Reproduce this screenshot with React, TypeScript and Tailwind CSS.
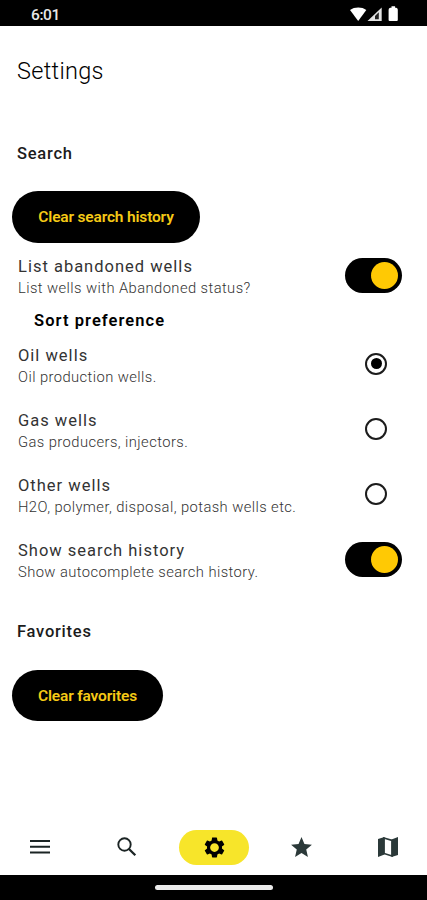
import { useState } from "react";
import type { ReactNode } from "react";
import { MdStar } from "react-icons/md";
import clsx from "clsx";

const wellTypes = [
  { id: "oil", title: "Oil wells", detail: "Oil production wells." },
  { id: "gas", title: "Gas wells", detail: "Gas producers, injectors." },
  { id: "other", title: "Other wells", detail: "H2O, polymer, disposal, potash wells etc." },
];

function StatusBar() {
  return (
    <header className="flex h-[26px] shrink-0 items-start justify-between bg-black pt-[6px] pr-[27px] pl-[31px] text-white">
      <span className="text-[15.5px] leading-[18px] font-medium tracking-[-0.4px] text-[#e8e8e8]">6:01</span>
      <svg width="50" height="16" viewBox="0 0 50 16" fill="#fff">
        <path d="M0 4C4.500 .7 12 .7 16.300 4L8.200 15Z" />
        <path d="M31.700 1.500V15H17.500Z" fill="#e4e4e4" />
        <path d="M28.800 6.300V13.300H25V10Z" fill="#222" />
        <path d="M41.500 .300h3.600v1.400h1.200q1.500 .6 1.500 2v10.300q0 1-1 1h-7.200q-1 0-1-1V3.700q0-1.400 1.500-2h1.400Z" />
      </svg>
    </header>
  );
}

function SettingRow({ title, detail, children }: { title: string; detail: string; children: ReactNode }) {
  return (
    <div className="flex h-[65px] items-center justify-between pr-[25px] pl-[18px]">
      <div className="pt-[3px]">
        <p className="text-[16.5px] leading-[22px] tracking-[1px] text-[#333]">{title}</p>
        <p className="text-[14.75px] leading-[21px] font-light tracking-[0.42px] text-[#333]">{detail}</p>
      </div>
      {children}
    </div>
  );
}

function Toggle({ on, onChange }: { on: boolean; onChange: () => void }) {
  return (
    <button role="switch" aria-checked={on} onClick={onChange} className={clsx("flex h-[35px] w-[57px] items-center rounded-full bg-black px-[4px]", on ? "justify-end" : "justify-start")}>
      <span className="size-[27px] rounded-full bg-[#ffc904]" />
    </button>
  );
}

function Radio({ checked, onChange }: { checked: boolean; onChange: () => void }) {
  return (
    <button role="radio" aria-checked={checked} onClick={onChange} className="mr-[15px] mb-[2px] flex size-[22px] items-center justify-center rounded-full border-2 border-[#1c1c1c]">
      {checked ? <span className="size-[11px] rounded-full bg-black" /> : null}
    </button>
  );
}

function PillButton({ className, children }: { className: string; children: ReactNode }) {
  return <button className={clsx("ml-[12px] block rounded-full bg-black pt-[2px] text-[15.5px] font-semibold tracking-[-0.17px] text-[#f6ca16]", className)}>{children}</button>;
}

function MenuIcon() {
  return (
    <svg width="20" height="14" viewBox="0 0 20 14" fill="#1b2424">
      <path d="M0 0h20v2H0zM0 5.700h20v2H0zM0 11.400h20v2H0z" />
    </svg>
  );
}

function SearchIcon() {
  return (
    <svg width="20" height="20" viewBox="0 0 20 20" fill="none" stroke="#1b2424">
      <circle cx="7.500" cy="7.500" r="6.200" strokeWidth="1.900" />
      <path d="M12 12L18.300 18.300" strokeWidth="2.300" />
    </svg>
  );
}

function GearIcon() {
  return (
    <svg width="25" height="25" viewBox="0 0 24 24" fill="currentColor">
      <path
        fillRule="evenodd"
        d="M19.140 12.940c.04-.3.06-.61.06-.94s-.02-.64-.07-.94l2.030-1.580a.49.49 0 0 0 .12-.61l-1.920-3.320a.488.488 0 0 0-.59-.22l-2.390.96c-.5-.38-1.030-.7-1.620-.94l-.36-2.540a.484.484 0 0 0-.48-.41h-3.840c-.24 0-.43.17-.47.41l-.36 2.540c-.59.24-1.130.57-1.620.94l-2.390-.96a.48.48 0 0 0-.59.22L2.740 8.870c-.12.21-.08.47.12.61l2.030 1.580c-.05.3-.09.63-.09.94s.02.64.07.94l-2.030 1.580a.49.49 0 0 0-.12.61l1.920 3.320c.12.22.37.29.59.22l2.390-.96c.5.38 1.030.7 1.620.94l.36 2.540c.05.24.24.41.48.41h3.840c.24 0 .44-.17.47-.41l.36-2.540c.59-.24 1.130-.56 1.620-.94l2.390.96c.22.08.47 0 .59-.22l1.920-3.320a.49.49 0 0 0-.12-.61zM12 16.200a4.200 4.200 0 1 1 0-8.400 4.200 4.200 0 0 1 0 8.400z"
      />
    </svg>
  );
}

function MapIcon() {
  return (
    <svg width="20" height="20" viewBox="0 0 20 20" fill="#2b3939">
      <path d="M0 2L6.500 0V17.500L0 20ZM13.500 2.500L20 0V18L13.500 20Z" />
      <path d="M6 .900L14 3.400V19L6 16.500Z" fill="none" stroke="#2b3939" strokeWidth="1.600" />
    </svg>
  );
}

const tabs = [
  { id: "menu", icon: <MenuIcon /> },
  { id: "search", icon: <SearchIcon /> },
  { id: "settings", icon: <GearIcon /> },
  { id: "favorites", icon: <MdStar size={25} /> },
  { id: "map", icon: <MapIcon /> },
];

export default function App() {
  const [listAbandoned, setListAbandoned] = useState(true);
  const [showHistory, setShowHistory] = useState(true);
  const [sort, setSort] = useState("oil");
  const [tab, setTab] = useState("settings");

  return (
    <div className="flex h-[900px] w-[427px] flex-col overflow-hidden bg-white font-[Roboto,sans-serif] whitespace-nowrap">
      <StatusBar />
      <main className="flex-1">
        <h1 className="mt-[29px] ml-[17px] text-[23.5px] leading-[32px] font-light tracking-[0.3px] text-black">Settings</h1>
        <h2 className="mt-[56px] ml-[17px] text-[16.5px] leading-[22px] font-medium tracking-[0.75px] text-[#1c1c1c]">Search</h2>
        <PillButton className="mt-[26px] h-[52px] w-[188px]">Clear search history</PillButton>
        <SettingRow title="List abandoned wells" detail="List wells with Abandoned status?">
          <Toggle on={listAbandoned} onChange={() => setListAbandoned(!listAbandoned)} />
        </SettingRow>
        <h3 className="ml-[34px] h-[24px] text-[16.5px] leading-[25px] font-semibold tracking-[1.06px] text-black">Sort preference</h3>
        <div role="radiogroup">
          {wellTypes.map((type) => (
            <SettingRow key={type.id} title={type.title} detail={type.detail}>
              <Radio checked={sort === type.id} onChange={() => setSort(type.id)} />
            </SettingRow>
          ))}
        </div>
        <SettingRow title="Show search history" detail="Show autocomplete search history.">
          <Toggle on={showHistory} onChange={() => setShowHistory(!showHistory)} />
        </SettingRow>
        <h2 className="mt-[29px] ml-[17px] text-[16.5px] leading-[22px] font-medium tracking-[0.75px] text-[#1c1c1c]">Favorites</h2>
        <PillButton className="mt-[27px] h-[51px] w-[151px]">Clear favorites</PillButton>
      </main>
      <nav className="flex h-[56px] shrink-0 items-center justify-between pr-[4px] pl-[5px]">
        {tabs.map(({ id, icon }) => (
          <button key={id} onClick={() => setTab(id)} className={clsx("flex h-[35px] w-[70px] items-center justify-center rounded-full", tab === id ? "bg-[#f7e52a] text-black" : "text-[#2b3939]")}>
            {icon}
          </button>
        ))}
      </nav>
      <footer className="flex h-[25px] shrink-0 justify-center bg-black pt-[10px]">
        <span className="h-[5px] w-[118px] rounded-full bg-[#ebebeb]" />
      </footer>
    </div>
  );
}
